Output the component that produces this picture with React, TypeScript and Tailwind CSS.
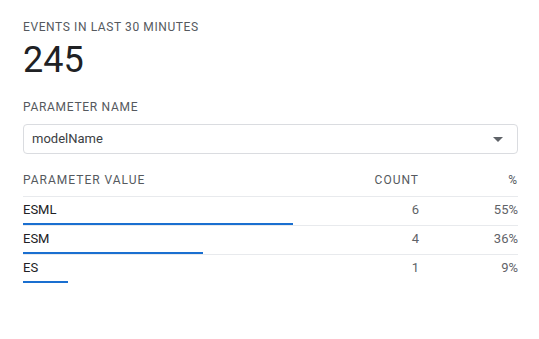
import React from 'react';

const rows = [
  { value: 'ESML', count: 6 },
  { value: 'ESM', count: 4 },
  { value: 'ES', count: 1 },
];

export default function App() {
  const total = rows.reduce((s, r) => s + r.count, 0);

  return (
    <div className="w-[539px] h-[339px] bg-white pl-[23px] pr-[21px] pt-[19px] font-['Roboto',sans-serif] text-[#202124]">
      {/* Summary */}
      <div className="text-[12px] leading-4 font-normal uppercase tracking-[0.6px] text-[#55595e]">
        Events in last 30 minutes
      </div>
      <div className="text-[36px] leading-[40px] font-normal mt-[5px]">245</div>

      {/* Parameter picker */}
      <div className="mt-[19px] text-[12px] leading-4 font-normal uppercase tracking-[0.7px] text-[#55595e]">
        Parameter name
      </div>
      <div className="mt-[9px] h-[30px] border border-[#dadce0] rounded-[4px] flex items-center justify-between pl-[8px] pr-[14px]">
        <span className="text-[13px] text-[#3c4043]">modelName</span>
        <svg width="10" height="5" viewBox="0 0 10 5">
          <path d="M0 0 L10 0 L5 5 Z" fill="#5f6368" />
        </svg>
      </div>

      {/* Table */}
      <div className="mt-[14px]">
        <div className="flex h-[29px] pt-[4px] border-b border-[#e8eaed] text-[12px] leading-4 font-normal uppercase tracking-[1px] text-[#55595e]">
          <div className="flex-1">Parameter value</div>
          <div className="w-[100px] text-right">Count</div>
          <div className="w-[99px] text-right">%</div>
        </div>
        {rows.map((r, i) => {
          const pct = (r.count / total) * 100;
          return (
            <div
              key={r.value}
              className={`h-[29px] pt-[3px] ${i < rows.length - 1 ? 'border-b border-[#e8eaed]' : ''}`}
            >
              <div className="flex h-5 leading-5 text-[13px]">
                <div className="flex-1 font-normal text-[#202124]">{r.value}</div>
                <div className="w-[100px] text-right text-[#5f6368]">{r.count}</div>
                <div className="w-[99px] text-right text-[#5f6368]">{Math.round(pct)}%</div>
              </div>
              <div className="mt-[3px] h-[2px] bg-[#1a6fd0]" style={{ width: `${pct}%` }} />
            </div>
          );
        })}
      </div>
    </div>
  );
}
